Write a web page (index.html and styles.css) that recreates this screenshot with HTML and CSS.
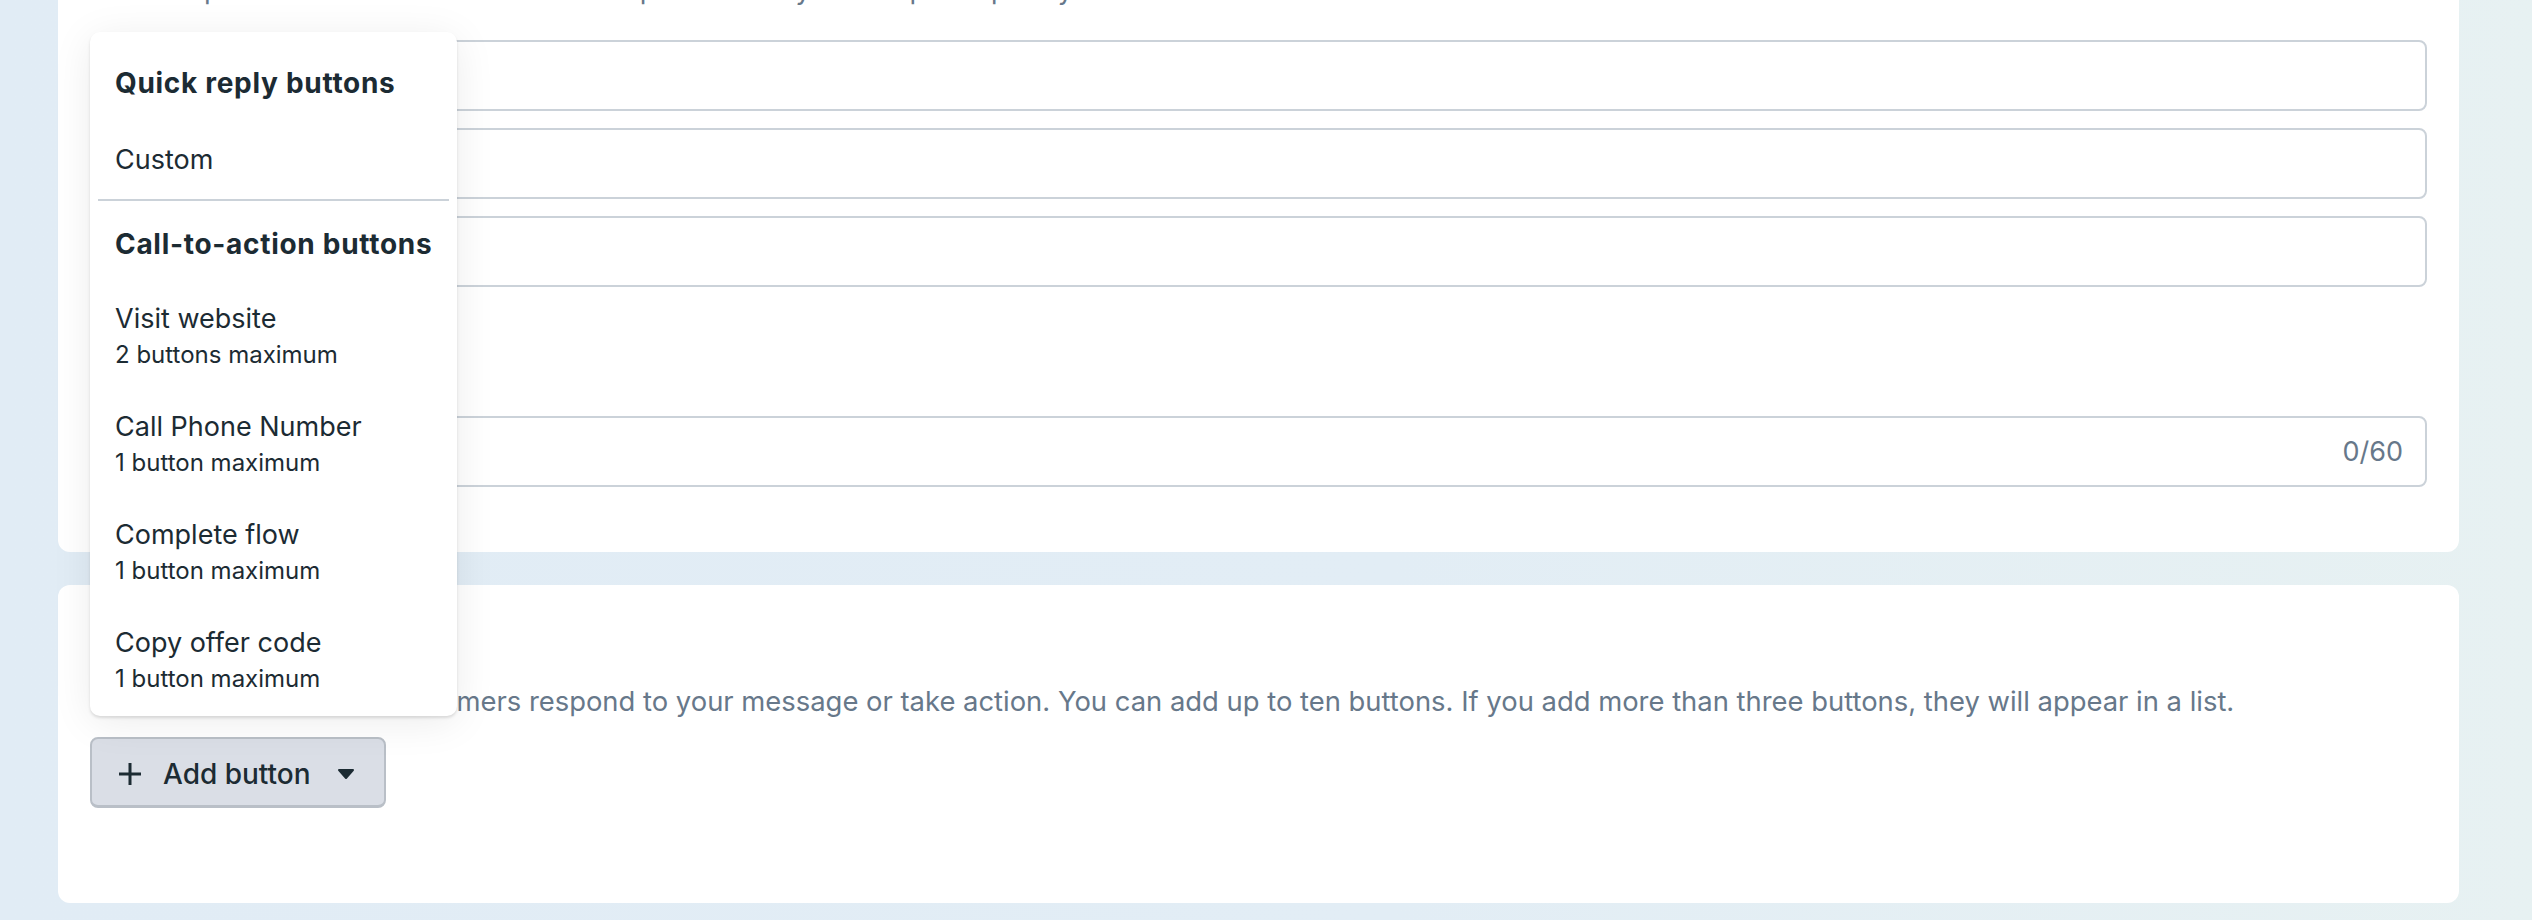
FILE: index.html
```html
<!DOCTYPE html>
<html lang="en">
<head>
  <meta charset="UTF-8" />
  <meta name="viewport" content="width=device-width, initial-scale=1.0"/>
  <title>Message template - Buttons</title>
  <link rel="stylesheet" href="styles.css">
</head>
<body>

<div class="page">

  <section class="card card-content">
    <p class="hint">Add sample values for each variable to help us review your template quickly.</p>

    <div class="fields">
      <div class="field"></div>
      <div class="field"></div>
      <div class="field"></div>
    </div>

    <h3 class="label">Footer</h3>
    <div class="field field-count">
      <span class="counter">0/60</span>
    </div>
  </section>

  <section class="card card-buttons">
    <h3 class="title">Buttons</h3>
    <p class="hint">Create buttons that let customers respond to your message or take action. You can add up to ten buttons. If you add more than three buttons, they will appear in a list.</p>

    <div class="btn-wrap">
      <button class="btn-add">
        <svg class="ico-plus" width="24" height="24" viewBox="0 0 24 24">
          <path d="M12 1v22M1 12h22" stroke="#1c2b33" stroke-width="3" fill="none"/>
        </svg>
        <span>Add button</span>
        <svg class="ico-caret" width="18" height="12" viewBox="0 0 18 12">
          <path d="M2 2h14l-7 8z" fill="#1c2b33" stroke="#1c2b33" stroke-width="2" stroke-linejoin="round"/>
        </svg>
      </button>

      <div class="menu">
        <div class="menu-head">Quick reply buttons</div>
        <div class="menu-item single">Custom</div>
        <hr class="menu-sep">
        <div class="menu-head">Call-to-action buttons</div>
        <div class="menu-item">
          <div class="item-name">Visit website</div>
          <div class="item-note">2 buttons maximum</div>
        </div>
        <div class="menu-item">
          <div class="item-name">Call Phone Number</div>
          <div class="item-note">1 button maximum</div>
        </div>
        <div class="menu-item">
          <div class="item-name">Complete flow</div>
          <div class="item-note">1 button maximum</div>
        </div>
        <div class="menu-item">
          <div class="item-name">Copy offer code</div>
          <div class="item-note">1 button maximum</div>
        </div>
      </div>
    </div>
  </section>

</div>

</body>
</html>
```

FILE: styles.css
```css
html, body {
  height: 100%;
}

body {
  margin: 0;
  font-family: "Inter", "Noto Sans", sans-serif;
  color: #1c2b33;
  background: linear-gradient(90deg, #e1ecf5 0%, #e2edf5 55%, #e7f1f2 100%);
  overflow: hidden;
}

.page {
  margin: -61px 73px 0 58px;
}

.card {
  background: white;
  border-radius: 12px;
  padding: 32px;
}

.card-content {
  padding-bottom: 65px;
}

.card-buttons {
  margin-top: 33px;
  padding-bottom: 95px;
}

.hint {
  margin: 0;
  font-size: 27.4px;
  line-height: 36px;
  color: #67788a;
  white-space: nowrap;
}

.card-content .hint {
  margin-bottom: 33px;
}

.fields {
  display: flex;
  flex-direction: column;
  gap: 17px;
}

.field {
  height: 67px;
  border: 2px solid #cbd2d9;
  border-radius: 8px;
}

.label {
  margin: 40px 0 53px;
  font-size: 28px;
  line-height: 36px;
  font-weight: 700;
}

.field-count {
  display: flex;
  align-items: center;
  justify-content: flex-end;
  padding-right: 22px;
}

.counter {
  font-size: 27px;
  color: #67788a;
}

.title {
  margin: 0 0 30px;
  font-size: 28px;
  line-height: 36px;
  font-weight: 700;
}

.card-buttons .hint {
  margin-bottom: 18px;
}

.btn-wrap {
  position: relative;
}

.btn-add {
  display: flex;
  align-items: center;
  height: 71px;
  padding: 3px 29px 0 26px;
  background: #dadee6;
  border: 2px solid #b9bfc7;
  border-bottom-width: 3px;
  border-radius: 8px;
  font-family: inherit;
  font-size: 28px;
  font-weight: 500;
  color: #1c2b33;
}

.btn-add span {
  margin: 0 26px 0 21px;
}

/* dropdown above the add button */
.menu {
  position: absolute;
  left: 0;
  bottom: calc(100% + 21px);
  width: 367px;
  padding: 11px 8px 0;
  box-sizing: border-box;
  background: white;
  border-radius: 10px;
  box-shadow: 0 2px 3px rgba(0, 0, 0, 0.12), 0 6px 40px rgba(0, 0, 0, 0.08);
}

.menu-head {
  height: 80px;
  display: flex;
  align-items: center;
  padding: 0 17px;
  font-size: 28px;
  font-weight: 700;
  letter-spacing: 0.7px;
  white-space: nowrap;
}

.menu-item {
  padding: 17px 17px 19px;
  font-size: 27px;
}

.menu-item.single {
  height: 72px;
  padding: 0 17px;
  display: flex;
  align-items: center;
  box-sizing: border-box;
}

.item-name {
  line-height: 36px;
}

.item-note {
  font-size: 24px;
  line-height: 36px;
}

.menu-sep {
  margin: 4px 0 3px;
  border: none;
  border-top: 2px solid #cbd2d9;
}
```
